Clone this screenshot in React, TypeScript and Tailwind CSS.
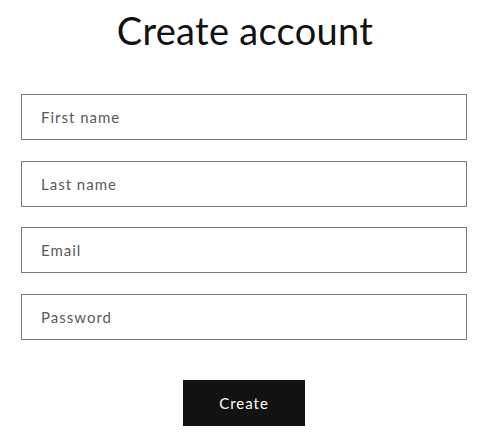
const fields = ['First name', 'Last name', 'Email', 'Password']

const App = () => {
  return (
    <div className="w-[490px] h-[439px] bg-white font-['Lato',sans-serif] text-[#121212]">
      <h1 className="pt-[6px] text-center text-[38px] leading-[48px] tracking-[0.3px] font-normal">
        Create account
      </h1>
      <form className="mt-[40px] pl-[21px] flex flex-col gap-[20.6px]">
        {fields.map(label => (
          <input
            key={label}
            type={label === 'Password' ? 'password' : 'text'}
            placeholder={label}
            className="h-[46px] w-[446px] border border-[#7b7b7b] px-[19px] text-[15px] tracking-[1px] text-[#333] placeholder:text-[#5a5a5a] outline-none"
          />
        ))}
        <div className="flex justify-center w-[446px] mt-[20px]">
          <button
            type="button"
            className="w-[122px] h-[46px] bg-[#121212] text-white text-[15px] tracking-[1px]"
          >
            Create
          </button>
        </div>
      </form>
    </div>
  )
}

export default App
